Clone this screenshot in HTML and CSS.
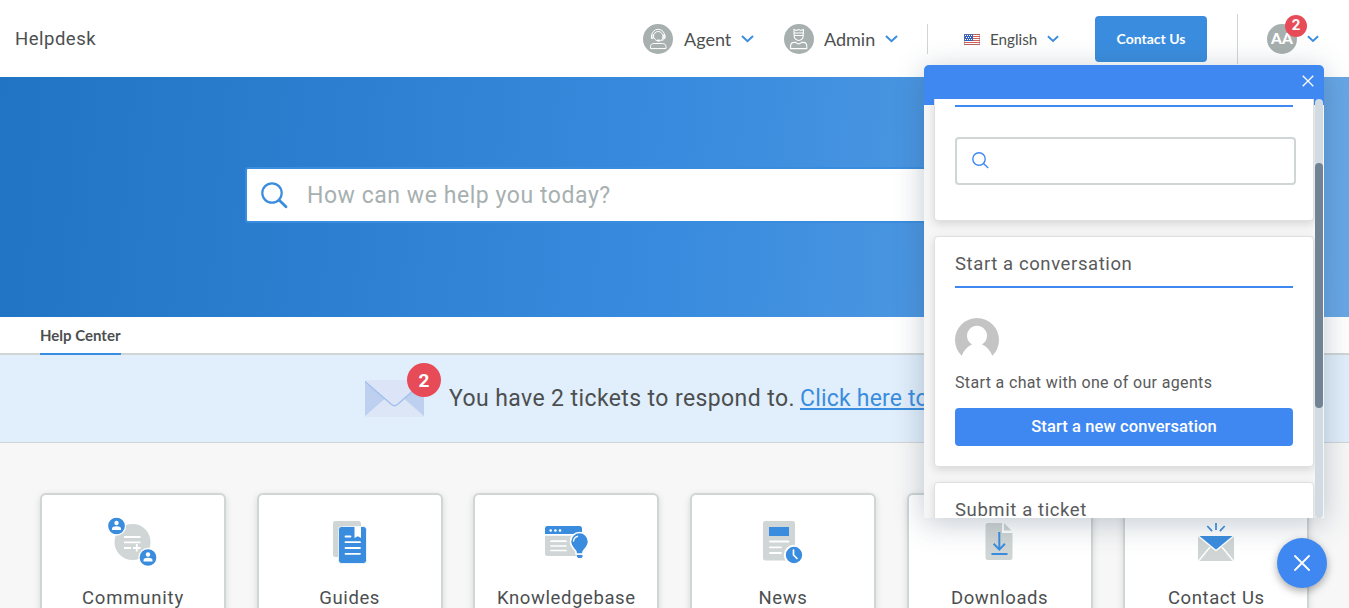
FILE: index.html
```html
<!DOCTYPE html>
<html lang="en">
<head>
<meta charset="utf-8">
<title>Helpdesk</title>
<link rel="stylesheet" href="styles.css">
</head>
<body>
<header class="topbar">
  <a class="brand">Helpdesk</a>
  <nav class="nav">
    <a class="nav-item agent">
      <svg class="role-icon" width="30" height="30" viewBox="0 0 30 30"><circle cx="15" cy="15" r="15" fill="#a7b0ae"/><g fill="none" stroke="#fff" stroke-width="1"><path d="M8.700 14v-2.200a6.500 6.500 0 0 1 13 0V14"/><path d="M10.500 12.200a4.700 4.700 0 0 1 9.400 0c0 2-1 4-2.200 4.600h-3.200c-2-.4-4-2.400-4-4.600z"/><path d="M8.400 10.800v3.600h1.700v-4M22 10.800v3.600h-1.700v-4M21.300 14.400c-.4 1.600-1.600 2-3 2.100"/><path d="M7.500 24.600v-2c0-2 1.500-3.100 3.500-3.100h8.500c2 0 3.500 1.100 3.500 3.100v2z"/></g><rect x="14" y="15.600" width="3" height="1.800" rx=".8" fill="#fff"/></svg>
      <span class="nav-label">Agent</span>
      <svg class="chev" width="13" height="8" viewBox="0 0 13 8"><path d="M1 1l5.500 5.200L12 1"/></svg>
    </a>
    <a class="nav-item admin">
      <svg class="role-icon" width="30" height="30" viewBox="0 0 30 30"><circle cx="15" cy="15" r="15" fill="#a7b0ae"/><g fill="none" stroke="#fff" stroke-width="1.100"><path d="M10 9V5.500l2.400 1L14.700 5.500l2.300 1 2.400-1V9z"/><path d="M10.200 9v3.300c0 2.200 2 4.200 4.500 4.200s4.500-2 4.500-4.200V9M10.200 11.500h9"/><path d="M6.600 24.600v-2.400c0-2.400 1.600-3.800 3.800-3.800h1.300c1.800 1.700 4.200 1.700 6 0H19c2.200 0 3.800 1.400 3.800 3.800v2.400z"/></g></svg>
      <span class="nav-label">Admin</span>
      <svg class="chev" width="13" height="8" viewBox="0 0 13 8"><path d="M1 1l5.500 5.200L12 1"/></svg>
    </a>
    <span class="rule"></span>
    <a class="nav-item lang">
      <svg class="flag" width="16" height="11" viewBox="0 0 16 11"><path fill="#fff" d="M0 0h16v11H0z"/><path stroke="#dd5d50" d="M0 .5h16M0 2.500h16M0 4.500h16M0 6.500h16M0 8.500h16M0 10.500h16"/><path fill="#2f62c0" d="M0 0h9v7H0z"/><path stroke="#fff" stroke-dasharray="1 1" d="M1 1.500h7M2 3.500h6M1 5.500h7"/><path fill="none" stroke="#8a6b80" stroke-opacity=".5" d="M.5.500h15v10H.5z"/></svg>
      <span class="nav-label">English</span>
      <svg class="chev" width="12" height="8" viewBox="0 0 13 8"><path d="M1 1l5.500 5.200L12 1"/></svg>
    </a>
    <a class="contact-btn">Contact Us</a>
    <span class="rule tall"></span>
    <a class="profile">
      <span class="avatar">AA<span class="badge">2</span></span>
      <svg class="chev" width="12" height="8" viewBox="0 0 13 8"><path d="M1 1l5.500 5.200L12 1"/></svg>
    </a>
  </nav>
</header>

<section class="hero">
  <div class="search">
    <svg width="27" height="27" viewBox="0 0 27 27" fill="none" stroke="#3a8dde" stroke-linecap="round"><circle cx="11" cy="11" r="9.700" stroke-width="2.200"/><path d="M18.500 18.500l6.500 6.200" stroke-width="2.800"/></svg>
    <span class="search-hint">How can we help you today?</span>
  </div>
</section>

<div class="tabs"><a class="tab">Help Center</a></div>

<section class="notice">
  <div class="mail">
    <svg width="59" height="37" viewBox="0 0 60 37" preserveAspectRatio="none"><path fill="#dde6f7" d="M0 0h60v37H0z"/><path fill="#bdd0f0" d="M0 1l21 17L0 36zM60 1L39 18l21 18z"/><path fill="#dce5f8" d="M0 0h60v1L34 24q-4 3-8 0L0 1z"/><path fill="none" stroke="#9fbfec" stroke-width="1.300" d="M0 1.500L27 24.500q3 2.500 6 0L59 2"/></svg>
    <span class="mail-badge">2</span>
  </div>
  <p class="notice-text">You have 2 tickets to respond to.</p>
  <a class="notice-link">Click here to</a>
</section>

<main class="cards">
  <a class="card">
    <svg width="50" height="50" viewBox="0 0 50 50"><circle cx="24.500" cy="25" r="18" fill="#d0d5d5"/><path stroke="#fff" stroke-width="1.800" d="M16 20h16.500M16 25.300h16.500M16 31h7M25 31h7.500M28.800 27v7.500"/><g fill="#3a8dde" stroke="#fff" stroke-width="1.300"><circle cx="8.500" cy="9" r="9"/><circle cx="40" cy="40.500" r="9"/></g><g fill="#fff"><circle cx="8.500" cy="6" r="2.200"/><path d="M4 13v-1.500c0-3 9-3 9 0V13z"/><circle cx="40" cy="37.500" r="2.200"/><path d="M35.500 44.500V43c0-3 9-3 9 0v1.500z"/></g></svg>
    <span class="card-title w-community">Community</span>
  </a>
  <a class="card">
    <svg width="50" height="50" viewBox="1 0 50 50"><rect x="9" y="4" width="28" height="36" rx="2.500" fill="#d0d5d5"/><rect x="14.500" y="9.500" width="28" height="37" rx="3" fill="#3a8dde" stroke="#fff" stroke-width=".8"/><path fill="#fff" d="M30.500 9.500h6.500v11.500l-3.200-1.800-3.300 1.800z"/><path stroke="#fff" stroke-width="1.800" stroke-linecap="round" d="M21.500 19.500h5M21.500 25.200h14.500M21.500 31h14.500M21.500 36.800h14.500"/></svg>
    <span class="card-title">Guides</span>
  </a>
  <a class="card">
    <svg width="50" height="50" viewBox="-1 0 50 50"><path fill="#3a8dde" d="M3 17v-5.500Q3 9 5.500 9h32Q40 9 40 11.500V17z"/><path fill="#d0d5d5" d="M3 18.800h37v18Q40 39 38 39H5.500Q3 39 3 36.500z"/><path stroke="#fff" stroke-width="1.700" stroke-linecap="round" d="M9 24.200h15M9 29h15M9 33.500h15"/><g fill="#fff"><circle cx="8.700" cy="13.500" r="1.300"/><circle cx="13.400" cy="13.500" r="1.300"/><circle cx="18" cy="13.500" r="1.300"/></g><path fill="#3a8dde" stroke="#fff" stroke-width="1.600" d="M34 37v-2c0-2-5.500-4.500-5.500-10.500a9 9 0 0 1 18 0c0 6-5.500 8.500-5.500 10.500v2z"/><path fill="#3a8dde" d="M35 38h5.500v1.500L39.500 41H36l-1-1.500z"/><path fill="none" stroke="#fff" stroke-width="1.400" stroke-linecap="round" d="M31.500 24q.3-3.500 4-4.700"/></svg>
    <span class="card-title">Knowledgebase</span>
  </a>
  <a class="card">
    <svg width="50" height="50" viewBox="0 0 50 50"><rect x="5" y="4" width="32" height="39.500" rx="2.500" fill="#d0d5d5"/><path fill="#3a8dde" d="M11 10h20v9H11z"/><path stroke="#fff" stroke-width="1.800" stroke-linecap="round" d="M12 24.500h18.500M12 30.300h11M12 36h11"/><circle cx="36" cy="38" r="9.200" fill="#3a8dde" stroke="#fff" stroke-width="2"/><path fill="none" stroke="#fff" stroke-width="1.700" stroke-linecap="round" d="M35.500 33v5l3.500 3.500"/></svg>
    <span class="card-title">News</span>
  </a>
  <a class="card">
    <svg width="50" height="50" viewBox="1 0 50 50"><path fill="#d0d5d5" d="M14 6h14v10h10.500v24.500q0 2.500-2.500 2.500h-22q-2.500 0-2.500-2.500V8.500Q11.500 6 14 6z"/><path fill="#d0d5d5" d="M30 6v7.500h7.500z"/><path fill="none" stroke="#3a8dde" stroke-width="2" d="M25.300 15v17M19.700 26.800l5.600 5.800 5.600-5.800M17.500 37h16"/></svg>
    <span class="card-title">Downloads</span>
  </a>
  <a class="card">
    <svg width="50" height="50" viewBox="0 0 50 50"><path fill="#d0d5d5" d="M7 19h36v22.500q0 2.500-2.500 2.500h-31Q7 44 7 41.500z"/><path fill="none" stroke="#fff" stroke-width="1.400" d="M8 43.500L19 30M42 43.500L31 30"/><path fill="#3a8dde" stroke="#fff" stroke-width="1.400" d="M6.500 18.300h37L25 33.500z"/><path stroke="#3a8dde" stroke-width="1.700" d="M25 6v7M16.300 9l4.800 5.200M33.700 9l-4.800 5.200"/></svg>
    <span class="card-title">Contact Us</span>
  </a>
</main>

<aside class="widget">
  <div class="widget-head"><svg width="12" height="12" viewBox="0 0 12 12" stroke="#fff" stroke-width="1.300"><path d="M.7.700l10.600 10.600M11.300.7L.7 11.300"/></svg></div>
  <div class="widget-body">
    <div class="panels">
      <section class="panel lookup">
        <div class="lookup-field"><svg width="17" height="17" viewBox="0 0 17 17" fill="none" stroke="#3f88f2" stroke-width="1.400"><circle cx="7" cy="7" r="6.200"/><path d="M11.500 11.500l4.700 4.500"/></svg></div>
      </section>
      <section class="panel chat">
        <h2 class="panel-title">Start a conversation</h2>
        <svg class="person" width="44" height="44" viewBox="0 0 44 44"><circle cx="22" cy="22" r="22" fill="#c4c4c4"/><path fill="#fff" d="M0 44L6.500 38q3.500-8.500 10.500-11.500a10 10 0 1 1 10 0Q34 29.500 37.500 38L44 44z"/></svg>
        <p class="chat-text">Start a chat with one of our agents</p>
        <a class="chat-btn">Start a new conversation</a>
      </section>
      <section class="panel ticket"><h2 class="panel-title">Submit a ticket</h2></section>
    </div>
    <div class="scroll"><div class="thumb"></div></div>
  </div>
</aside>
<a class="fab"><svg width="16" height="16" viewBox="0 0 16 16" stroke="#fff" stroke-width="1.800" stroke-linecap="round"><path d="M1 1l14 14M15 1L1 15"/></svg></a>
</body>
</html>
```
FILE: styles.css
```css
* { box-sizing: border-box; }
html { overflow: hidden; }
body { margin: 0; height: 608px; overflow: hidden; position: relative; background: #f7f7f7; color: #4c4f50; font-family: Roboto, sans-serif; }
svg { display: block; flex: none; }
p, h2 { margin: 0; font-weight: 400; }
.topbar { height: 77px; background: #fff; display: flex; justify-content: space-between; padding: 0 30px 0 15px; }
.brand { font-size: 18.500px; letter-spacing: .5px; line-height: 78px; }
.nav { display: flex; align-items: center; height: 78px; font-family: Lato, sans-serif; }
.nav-item { display: flex; align-items: center; }
.nav-label { font-size: 18px; white-space: nowrap; }
.chev { fill: none; stroke: #3a8dde; stroke-width: 2; }
.agent { width: 141px; }
.admin { width: 143px; }
.role-icon { margin-right: 11px; }
.admin .role-icon { margin-right: 10px; }
.nav-item .nav-label { width: 47px; margin-right: 10px; }
.admin .nav-label { width: 51px; }
.rule { width: 1px; height: 30px; background: #d0d5d5; }
.lang { margin-left: 36px; width: 131px; }
.lang .nav-label { font-size: 15.200px; }
.flag { margin-right: 10px; }
.contact-btn { width: 112px; height: 46px; background: #3a8dde; color: #fff; border-radius: 4px; font-size: 14px; font-weight: 700; text-align: center; line-height: 46px; }
.rule.tall { height: 50px; margin: 0 29px 0 30px; }
.profile { display: flex; align-items: center; gap: 10px; }
.avatar { position: relative; width: 30px; height: 30px; border-radius: 50%; background: #a7b0ae; color: #fff; font-size: 15.500px; font-weight: 900; text-align: center; line-height: 29px; }
.badge { position: absolute; left: 18px; top: -9px; width: 22px; height: 22px; border-radius: 50%; background: #e84b58; font: 700 15px/21px Roboto, sans-serif; }
.hero { height: 240px; padding-top: 90px; background: linear-gradient(95deg, #2173c3 0%, #388bde 50%, #68a7e6 100%); }
.search { width: 859px; height: 56px; margin: 0 auto; border: 2px solid #3a8dde; border-radius: 3px; background: #fff; display: flex; align-items: center; padding-left: 14px; }
.search-hint { margin-left: 19px; padding-top: 1px; font-size: 23px; letter-spacing: .55px; color: #a7b0b0; }
.tabs { height: 38px; padding-left: 40px; background: #fff; border-bottom: 2px solid #d0d5d5; display: flex; }
.tab { height: 38px; width: 81px; border-bottom: 2px solid #3a8dde; font: 700 15px/37px Lato, sans-serif; white-space: nowrap; }
.notice { height: 88px; background: #e1eefb; border-bottom: 1px solid #d0d5d5; display: flex; align-items: center; padding-left: 365px; font-size: 23px; white-space: nowrap; }
.mail { position: relative; width: 60px; height: 37px; }
.mail-badge { position: absolute; left: 42px; top: -17px; width: 34px; height: 34px; border-radius: 50%; background: #e84b58; color: #fff; font-size: 19px; font-weight: 700; line-height: 35px; text-align: center; }
.notice-text { width: 351px; margin-left: 24px; letter-spacing: .4px; }
.notice-link { color: #3a8dde; text-decoration: underline; text-decoration-thickness: 2px; text-underline-offset: 2px; letter-spacing: .2px; }
.cards { display: grid; grid-template-columns: repeat(6, 1fr); gap: 30.600px; padding: 50px 39.700px 0 40px; }
.card { height: 180px; background: #fff; border: 2px solid #d0d5d5; border-radius: 6px; box-shadow: 0 2px 7px rgba(0,0,0,.13); display: flex; flex-direction: column; align-items: center; padding-top: 22px; }
.card-title { margin-top: 20px; font-size: 18.500px; line-height: 22px; letter-spacing: .6px; white-space: nowrap; }
.w-community { letter-spacing: .8px; }
.widget { position: absolute; left: 924px; top: 65px; width: 400px; height: 453px; background: #f6f6f6; border-radius: 5px 5px 0 0; box-shadow: 0 5px 30px rgba(54,76,99,.3); }
.widget-head { height: 40px; background: #3f88f2; border-radius: 5px 5px 0 0; display: flex; justify-content: flex-end; padding: 10px 10px 0; }
.widget-body { height: 419px; margin-top: -6px; display: flex; overflow: hidden; position: relative; }
.panels { width: 380px; margin: 0 1px 0 10px; flex: none; }
.panel { background: #fff; border: 1px solid #dfe0e0; border-radius: 4px; padding: 0 20px; box-shadow: 0 3px 10px rgba(0,0,0,.13); margin-bottom: 15px; }
.lookup { height: 122px; border-top: 0; border-radius: 0 0 4px 4px; padding: 6px 17px 0 20px; }
.lookup::before { content: ""; display: block; width: 338px; height: 2px; background: #3f88f2; margin-bottom: 30px; }
.lookup-field { width: 341px; height: 48px; padding: 13px 15px; border: 2px solid #d0d5d5; border-radius: 4px; }
.chat { height: 231px; }
.panel-title { height: 51px; line-height: 55px; font-size: 18.500px; color: #585a5b; letter-spacing: .6px; border-bottom: 2px solid #3f88f2; white-space: nowrap; }
.person { margin-top: 30px; }
.chat-text { font-size: 16px; line-height: 20px; margin: 11px 0 15px; white-space: nowrap; color: #585a5b; letter-spacing: .35px; }
.chat-btn { display: block; height: 38px; line-height: 37px; border-radius: 4px; background: #3f88f2; color: #fff; text-align: center; font-size: 16.500px; font-weight: 500; letter-spacing: .1px; }
.ticket { height: 150px; }
.scroll { width: 8px; height: 419px; padding-top: 64px; background: #d3dbe2; border-radius: 4px; }
.thumb { height: 245px; background: #708495; border-radius: 4px; }
.fab { position: absolute; left: 1277px; top: 538px; width: 50px; height: 50px; border-radius: 50%; background: #3f88f2; box-shadow: 0 3px 8px rgba(0,0,0,.35); display: flex; align-items: center; justify-content: center; }
```
